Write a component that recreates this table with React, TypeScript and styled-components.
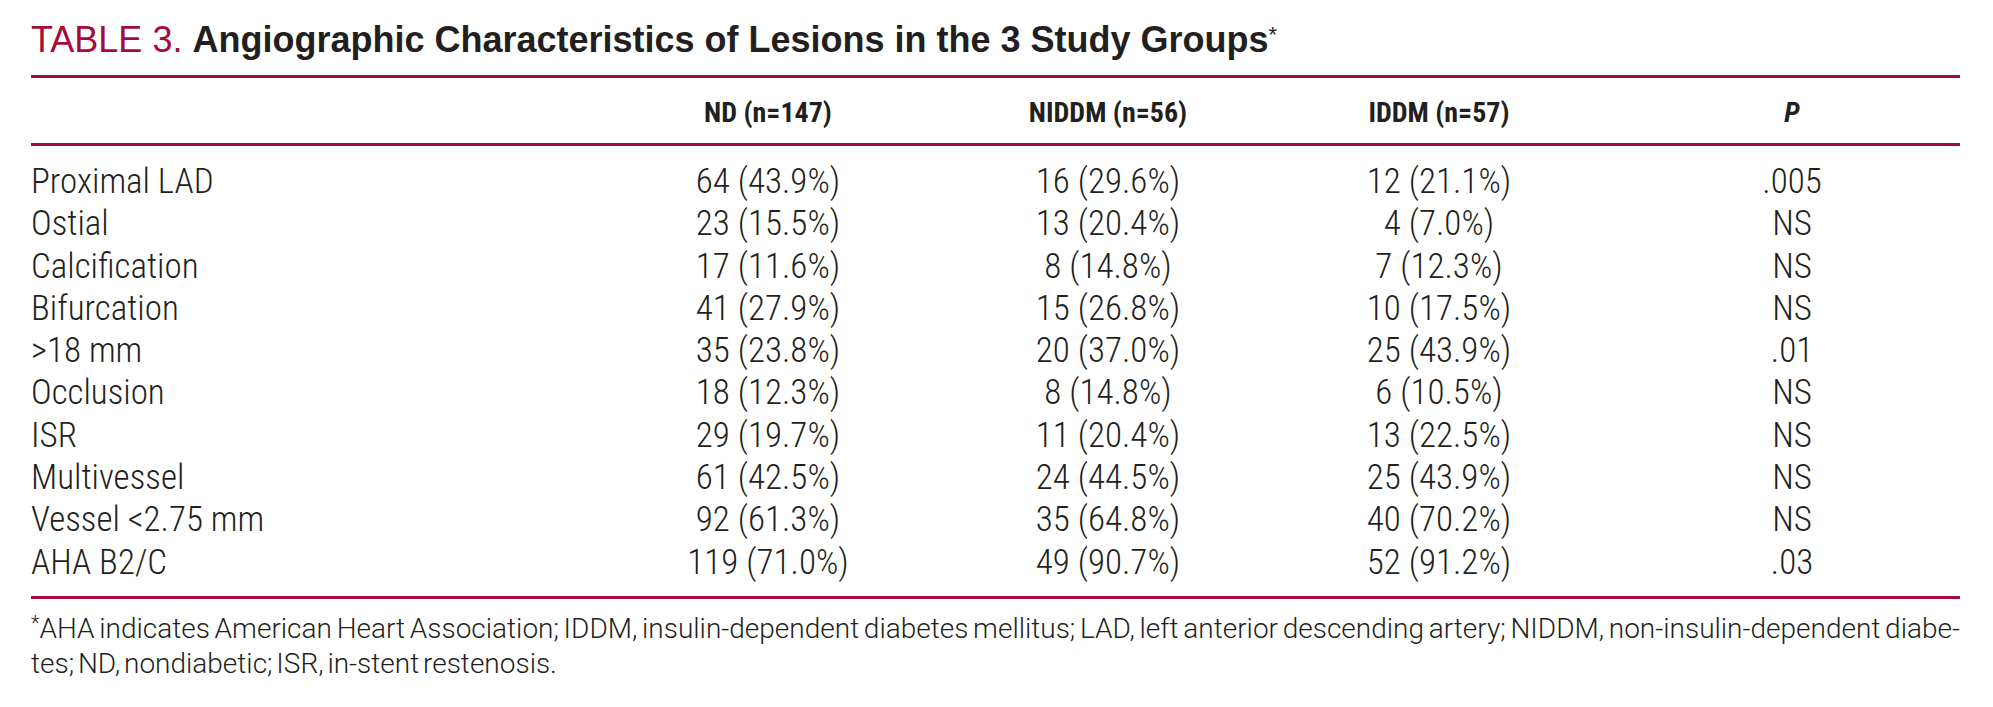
import React from 'react';
import styled, { createGlobalStyle } from 'styled-components';

const GlobalStyle = createGlobalStyle`
  body {
    margin: 0;
    padding: 0;
    background: #ffffff;
    color: #231f20;
    font-family: Roboto, "Liberation Sans", sans-serif;
    font-stretch: 86%;
  }
`;

const RED = '#a50a3a';
const COLS = '567px 340px 340px 322px 360px';

const Page = styled.div`
  width: 1929px;
  padding: 20px 0 0 31px;
`;

const Title = styled.h1`
  margin: 0;
  font-family: "Liberation Sans", Arial, sans-serif;
  font-stretch: normal;
  font-size: 36px;
  line-height: 40px;
  font-weight: 400;
  white-space: nowrap;
`;

const Label = styled.span`
  color: ${RED};
`;

const Caption = styled.span`
  font-weight: 700;
  color: #231f20;
`;

const Star = styled.sup`
  font-weight: 400;
  font-size: 22px;
  vertical-align: 10px;
  line-height: 0;
`;

const Rule = styled.hr<{ $top?: number }>`
  margin: ${p => p.$top ?? 0}px 0 0 0;
  border: 0;
  height: 3px;
  background: ${RED};
`;

const Head = styled.div`
  display: grid;
  grid-template-columns: ${COLS};
  padding: 18px 0 14px;
  font-size: 28px;
  line-height: 33px;
  font-weight: 700;
`;

const Body = styled.div`
  padding: 15px 0 12px;
`;

const Row = styled.div`
  display: grid;
  grid-template-columns: ${COLS};
  font-size: 35px;
  line-height: 42.3px;
  font-weight: 300;
`;

const Cell = styled.div<{ $label?: boolean; $last?: boolean; $italic?: boolean }>`
  text-align: ${p => (p.$label ? 'left' : 'center')};
  padding-left: ${p => (p.$last ? 24 : 0)}px;
  font-style: ${p => (p.$italic ? 'italic' : 'normal')};
  white-space: nowrap;
`;

const Note = styled.div`
  margin-top: 12px;
  font-size: 28px;
  line-height: 35px;
  font-weight: 300;
  font-stretch: 95%;
  word-spacing: -3px;
`;

const NoteLine = styled.div<{ $full?: boolean }>`
  text-align: justify;
  text-align-last: ${p => (p.$full ? 'justify' : 'left')};
  white-space: nowrap;
`;

const NoteStar = styled.span`
  font-size: 20px;
  vertical-align: 8px;
  line-height: 0;
`;

const rows: string[][] = [
  ['Proximal LAD', '64 (43.9%)', '16 (29.6%)', '12 (21.1%)', '.005'],
  ['Ostial', '23 (15.5%)', '13 (20.4%)', '4 (7.0%)', 'NS'],
  ['Calcification', '17 (11.6%)', '8 (14.8%)', '7 (12.3%)', 'NS'],
  ['Bifurcation', '41 (27.9%)', '15 (26.8%)', '10 (17.5%)', 'NS'],
  ['>18 mm', '35 (23.8%)', '20 (37.0%)', '25 (43.9%)', '.01'],
  ['Occlusion', '18 (12.3%)', '8 (14.8%)', '6 (10.5%)', 'NS'],
  ['ISR', '29 (19.7%)', '11 (20.4%)', '13 (22.5%)', 'NS'],
  ['Multivessel', '61 (42.5%)', '24 (44.5%)', '25 (43.9%)', 'NS'],
  ['Vessel <2.75 mm', '92 (61.3%)', '35 (64.8%)', '40 (70.2%)', 'NS'],
  ['AHA B2/C', '119 (71.0%)', '49 (90.7%)', '52 (91.2%)', '.03'],
];

export default function App() {
  return (
    <>
      <GlobalStyle />
      <Page>
        <Title>
          <Label>TABLE 3.</Label>{' '}
          <Caption>
            Angiographic Characteristics of Lesions in the 3 Study Groups<Star>*</Star>
          </Caption>
        </Title>
        <Rule $top={15} />
        <Head>
          <Cell $label />
          <Cell>ND (n=147)</Cell>
          <Cell>NIDDM (n=56)</Cell>
          <Cell>IDDM (n=57)</Cell>
          <Cell $last $italic>P</Cell>
        </Head>
        <Rule />
        <Body>
          {rows.map(r => (
            <Row key={r[0]}>
              <Cell $label>{r[0]}</Cell>
              <Cell>{r[1]}</Cell>
              <Cell>{r[2]}</Cell>
              <Cell>{r[3]}</Cell>
              <Cell $last>{r[4]}</Cell>
            </Row>
          ))}
        </Body>
        <Rule />
        <Note>
          <NoteLine $full>
            <NoteStar>*</NoteStar>AHA indicates American Heart Association; IDDM, insulin-dependent diabetes mellitus; LAD, left anterior descending artery; NIDDM, non-insulin-dependent diabe-
          </NoteLine>
          <NoteLine>tes; ND, nondiabetic; ISR, in-stent restenosis.</NoteLine>
        </Note>
      </Page>
    </>
  );
}
